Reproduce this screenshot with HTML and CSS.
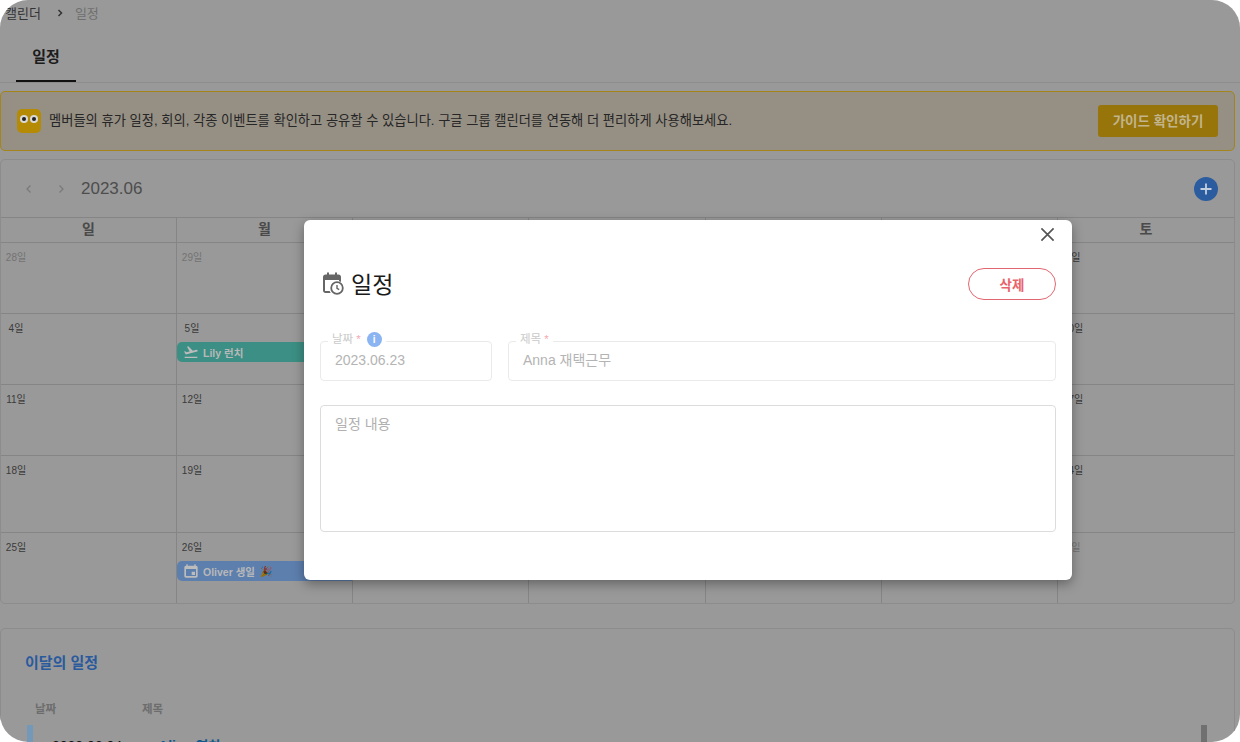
FILE: index.html
```html
<!DOCTYPE html>
<html lang="ko">
<head>
<meta charset="UTF-8">
<title>캘린더 - 일정</title>
<link rel="stylesheet" href="styles.css">
</head>
<body>
<div id="frame">
  <div class="breadcrumb">
    <span class="crumb">캘린더</span>
    <svg class="crumb-arrow" viewBox="0 0 8 10"><path d="M2.5 2 L5.5 5 L2.5 8" /></svg>
    <span class="crumb-now">일정</span>
  </div>
  <div class="tabs">
    <div class="tab">일정</div>
  </div>
  <div class="banner">
    <div class="banner-left">
      <div class="eyes"><i></i><i></i></div>
      <span>멤버들의 휴가 일정, 회의, 각종 이벤트를 확인하고 공유할 수 있습니다. 구글 그룹 캘린더를 연동해 더 편리하게 사용해보세요.</span>
    </div>
    <button class="guide-btn">가이드 확인하기</button>
  </div>
  <div class="calendar">
    <div class="cal-head">
      <svg class="nav-arrow" viewBox="0 0 12 12"><path d="M7.5 2.5 L4 6 L7.5 9.5" /></svg>
      <svg class="nav-arrow" viewBox="0 0 12 12"><path d="M4.5 2.5 L8 6 L4.5 9.5" /></svg>
      <span class="cal-month">2023.06</span>
      <button class="add-btn"><svg viewBox="0 0 24 24"><path d="M12 6.500 V17.500 M6.500 12 H17.500" /></svg></button>
    </div>
    <div class="cal-grid">
      <div class="wd">일</div><div class="wd">월</div><div class="wd">화</div><div class="wd">수</div><div class="wd">목</div><div class="wd">금</div><div class="wd">토</div>

      <div class="day off"><span class="num">28일</span></div>
      <div class="day off"><span class="num">29일</span></div>
      <div class="day off"><span class="num">30일</span></div>
      <div class="day off"><span class="num">31일</span></div>
      <div class="day"><span class="num">1일</span></div>
      <div class="day"><span class="num">2일</span></div>
      <div class="day"><span class="num">3일</span></div>

      <div class="day"><span class="num">4일</span></div>
      <div class="day">
        <span class="num">5일</span>
        <div class="event teal">
          <svg viewBox="0 0 24 24"><path d="M2.500 19h19v2h-19z M22 9.600c-.2-.8-1-1.300-1.800-1.100L14.800 10 7.900 3.500 6 4l4.100 7.200-5 1.300-2-1.500-1.500.4 2.600 4.500 17-4.600c.8-.2 1-.9.800-1.700z" /></svg>
          Lily 런치
        </div>
      </div>
      <div class="day"><span class="num">6일</span></div>
      <div class="day"><span class="num">7일</span></div>
      <div class="day"><span class="num">8일</span></div>
      <div class="day"><span class="num">9일</span></div>
      <div class="day"><span class="num">10일</span></div>

      <div class="day"><span class="num">11일</span></div>
      <div class="day"><span class="num">12일</span></div>
      <div class="day"><span class="num">13일</span></div>
      <div class="day"><span class="num">14일</span></div>
      <div class="day"><span class="num">15일</span></div>
      <div class="day"><span class="num">16일</span></div>
      <div class="day"><span class="num">17일</span></div>

      <div class="day"><span class="num">18일</span></div>
      <div class="day"><span class="num">19일</span></div>
      <div class="day"><span class="num">20일</span></div>
      <div class="day"><span class="num">21일</span></div>
      <div class="day"><span class="num">22일</span></div>
      <div class="day"><span class="num">23일</span></div>
      <div class="day"><span class="num">24일</span></div>

      <div class="day"><span class="num">25일</span></div>
      <div class="day">
        <span class="num">26일</span>
        <div class="event blue">
          <svg viewBox="0 0 24 24"><path d="M17 2v2H7V2H5v2H4.500C3.100 4 2 5.100 2 6.500v13C2 20.900 3.100 22 4.500 22h15c1.400 0 2.500-1.100 2.500-2.500v-13C22 5.100 20.900 4 19.500 4H19V2h-2zM4.500 9h15v10.500h-15V9zM13 13h5v5h-5z" /></svg>
          Oliver 생일 <span class="party">🎉</span>
        </div>
      </div>
      <div class="day"><span class="num">27일</span></div>
      <div class="day"><span class="num">28일</span></div>
      <div class="day"><span class="num">29일</span></div>
      <div class="day"><span class="num">30일</span></div>
      <div class="day off"><span class="num">1일</span></div>
    </div>
  </div>
  <div class="month-list">
    <h3>이달의 일정</h3>
    <div class="list-head"><span class="col-date">날짜</span><span>제목</span></div>
    <div class="list-row">
      <span class="col-date">2023.06.04</span>
      <span class="row-title">Alice 연차</span>
    </div>
  </div>

  <div class="backdrop">
    <div class="modal">
      <button class="close-btn"><svg viewBox="0 0 16 16"><path d="M1.500 1.500 L14.500 14.500 M14.500 1.500 L1.500 14.500" /></svg></button>
      <div class="modal-head">
        <h2>
          <svg viewBox="0 0 24 24"><path d="M7 1.500v2H5.500C4.100 3.500 3 4.600 3 6v13.500C3 20.900 4.100 22 5.500 22h5.200a7 7 0 0 1-1-2H5V9h14v1.200a7 7 0 0 1 2 .9V6c0-1.400-1.100-2.500-2.500-2.500H17v-2h-2v2H9v-2H7z" /><path d="M5 5.500h14V9H5z" /><circle class="clock" cx="17" cy="17" r="5.800" /><path class="hands" d="M17 14v3.300l2.200 1.300" /></svg>
          일정
        </h2>
        <button class="del-btn">삭제</button>
      </div>
      <div class="field-row">
        <div class="field date-field">
          <label>날짜 <em>*</em><span class="info">i</span></label>
          <div class="value">2023.06.23</div>
        </div>
        <div class="field title-field">
          <label>제목 <em>*</em></label>
          <div class="value">Anna 재택근무</div>
        </div>
      </div>
      <div class="memo">일정 내용</div>
    </div>
  </div>
</div>
</body>
</html>
```

FILE: styles.css
```css
html, body {
  margin: 0;
  padding: 0;
  background: #fff;
}
body {
  width: 1240px;
  height: 742px;
  overflow: hidden;
  font-family: 'Liberation Sans', 'Noto Sans CJK KR', sans-serif;
}
button {
  font-family: inherit;
  border: none;
  padding: 0;
}
#frame {
  position: relative;
  width: 1240px;
  height: 742px;
  overflow: hidden;
  background: #999;
  border-radius: 28px;
}

/* breadcrumb + tabs */
.breadcrumb {
  height: 25px;
  display: flex;
  align-items: center;
  padding-left: 5px;
  font-size: 13px;
  color: #333;
}
.crumb-arrow {
  width: 8px;
  height: 10px;
  margin: 0 11px 0 15px;
  fill: none;
  stroke: #333;
  stroke-width: 1.500;
}
.crumb-now {
  color: #6f6f6f;
}
.tabs {
  height: 57px;
  padding-left: 16px;
  border-bottom: 1px solid #8c8c8c;
}
.tab {
  width: 60px;
  height: 55px;
  border-bottom: 2px solid #111;
  text-align: center;
  font-size: 15px;
  font-weight: 700;
  line-height: 64px;
  color: #1c1c1c;
}

/* banner */
.banner {
  margin: 8px 5px 0 0;
  height: 58px;
  border: 1px solid #a5841a;
  border-radius: 5px;
  background: #969084;
  display: flex;
  align-items: center;
  justify-content: space-between;
  padding: 0 16px;
  font-size: 13.250px;
  color: #262626;
}
.banner-left {
  display: flex;
  align-items: center;
  gap: 8px;
}
.banner-left span {
  margin-bottom: 3px;
}
.eyes {
  width: 24px;
  height: 24px;
  border-radius: 5px;
  background: #b58a05;
  display: flex;
  align-items: center;
  justify-content: center;
  gap: 2px;
  padding-bottom: 4px;
  box-sizing: border-box;
}
.eyes i {
  width: 8px;
  height: 8px;
  border-radius: 50%;
  background: #d8d8d8;
  position: relative;
}
.eyes i::after {
  content: "";
  position: absolute;
  left: 2px;
  top: 2px;
  width: 4px;
  height: 4px;
  border-radius: 50%;
  background: #222;
}
.guide-btn {
  width: 120px;
  height: 32px;
  border-radius: 3px;
  padding-bottom: 2px;
  background: #97750a;
  color: #c2b48c;
  font-size: 13.500px;
  font-weight: 700;
}

/* calendar */
.calendar {
  margin: 8px 5px 0 0;
  border: 1px solid #8c8c8c;
  border-radius: 5px;
  overflow: hidden;
}
.cal-head {
  height: 57px;
  display: flex;
  align-items: center;
  padding: 0 16px 0 22px;
  color: #4d4d4d;
}
.nav-arrow {
  width: 12px;
  height: 12px;
  margin-right: 20px;
  fill: none;
  stroke: #7a7a7a;
  stroke-width: 1.300;
}
.cal-month {
  font-size: 17px;
  margin-left: -6px;
}
.add-btn {
  margin-left: auto;
  width: 24px;
  height: 24px;
  border-radius: 50%;
  background: #2b5ca0;
}
.add-btn svg {
  display: block;
  fill: none;
  stroke: #c4cfdd;
  stroke-width: 1.800;
}
.cal-grid {
  display: grid;
  grid-template-columns: 176px 176px 176px 177px 176px 176px 176px;
  grid-template-rows: 25px 71px 71px 71px 77px 70px;
  border-top: 1px solid #858585;
}
.wd {
  border-right: 1px solid #858585;
  border-bottom: 1px solid #858585;
  text-align: center;
  font-size: 14px;
  font-weight: 700;
  line-height: 23px;
  color: #4a4a4a;
}
.day {
  position: relative;
  border-right: 1px solid #858585;
  border-bottom: 1px solid #858585;
  font-size: 10px;
  color: #3a3a3a;
}
.wd:nth-child(7n), .day:nth-child(7n) {
  border-right: none;
}
.day:nth-last-child(-n+7) {
  border-bottom: none;
}
.num {
  display: block;
  width: 30px;
  margin-top: 8px;
  text-align: center;
  line-height: 14px;
}
.off .num {
  color: #737373;
}
.event {
  margin-top: 6px;
  height: 20px;
  width: 175px;
  border-radius: 5px 0 0 5px;
  display: flex;
  align-items: center;
  gap: 4px;
  padding-left: 6px;
  box-sizing: border-box;
  font-size: 10.500px;
  font-weight: 700;
  color: #b8b8b8;
  white-space: nowrap;
  position: relative;
}
.event svg {
  width: 16px;
  height: 16px;
  fill: #bcbcbc;
  flex: none;
}
.event.teal { background: #3c8f84; }
.event.blue { background: #5d7fae; }
.party {
  font-size: 10px;
  margin-left: 1px;
  filter: brightness(.6);
}

/* this month's list */
.month-list {
  margin: 24px 5px 0 0;
  height: 160px;
  border: 1px solid #8c8c8c;
  border-radius: 5px;
  padding: 24px;
  box-sizing: border-box;
  position: relative;
}
.month-list h3 {
  margin: 0;
  font-size: 15px;
  font-weight: 700;
  line-height: 20px;
  color: #2a5a9e;
}
.list-head {
  display: flex;
  margin-top: 28px;
  padding-left: 10px;
  font-size: 11.500px;
  font-weight: 700;
  line-height: 16px;
  color: #6d6d6d;
}
.col-date {
  width: 107px;
}
.list-row {
  display: flex;
  gap: 36px;
  margin: 8px 3px 0 2px;
  padding-left: 19px;
  height: 60px;
  border-left: 6px solid #7498b8;
  border-right: 6px solid #707070;
  font-size: 14px;
  line-height: 42px;
  color: #111;
}
.list-row .col-date {
  width: auto;
}
.row-title {
  color: #14588c;
  font-weight: 700;
}

/* modal */
.backdrop {
  position: absolute;
  left: 304px;
  top: 220px;
}
.modal {
  position: relative;
  width: 768px;
  height: 360px;
  box-sizing: border-box;
  background: #fff;
  border-radius: 6px;
  box-shadow: 0 4px 12px rgba(0, 0, 0, .35);
  padding: 48px 16px 0;
}
.close-btn {
  position: absolute;
  right: 17px;
  top: 7px;
  width: 15px;
  height: 15px;
  background: none;
}
.close-btn svg {
  display: block;
  width: 15px;
  height: 15px;
  fill: none;
  stroke: #555;
  stroke-width: 1.800;
}
.modal-head {
  display: flex;
  align-items: center;
  justify-content: space-between;
  height: 32px;
}
.modal-head h2 {
  margin: 0 0 2px;
  display: flex;
  align-items: center;
  gap: 7px;
  font-size: 23px;
  font-weight: 400;
  color: #1a1a1a;
}
.modal-head svg {
  width: 24px;
  height: 24px;
  fill: #666;
  flex: none;
}
.modal-head svg .clock {
  fill: #fff;
  stroke: #666;
  stroke-width: 1.800;
}
.modal-head svg .hands {
  fill: none;
  stroke: #666;
  stroke-width: 1.400;
}
.del-btn {
  width: 88px;
  height: 32px;
  border: 1px solid #e2666f;
  border-radius: 16px;
  background: #fff;
  color: #e8636c;
  font-size: 13.500px;
  font-weight: 700;
}
.field-row {
  display: flex;
  gap: 16px;
  margin-top: 41px;
}
.field {
  position: relative;
  height: 40px;
  box-sizing: border-box;
  border: 1px solid #eaeaea;
  border-radius: 4px;
}
.date-field { width: 172px; }
.title-field { width: 548px; }
.field label {
  position: absolute;
  left: 7px;
  top: -11px;
  display: flex;
  align-items: center;
  gap: 3px;
  padding: 0 4px;
  background: #fff;
  font-size: 11.500px;
  line-height: 16px;
  color: #c9c9c9;
}
.field em {
  font-style: normal;
  color: #f5a9b4;
}
.info {
  width: 15px;
  height: 15px;
  margin-left: 3px;
  border-radius: 50%;
  background: #8ab4f2;
  color: #fff;
  font-size: 10px;
  font-weight: 700;
  line-height: 15px;
  text-align: center;
}
.value {
  padding-left: 14px;
  font-size: 14px;
  line-height: 37px;
  color: #b4b4b4;
}
.memo {
  margin-top: 24px;
  width: 736px;
  height: 127px;
  box-sizing: border-box;
  border: 1px solid #dcdcdc;
  border-radius: 4px;
  padding: 9px 14px;
  font-size: 14px;
  line-height: 18px;
  color: #b0b0b0;
}
```
